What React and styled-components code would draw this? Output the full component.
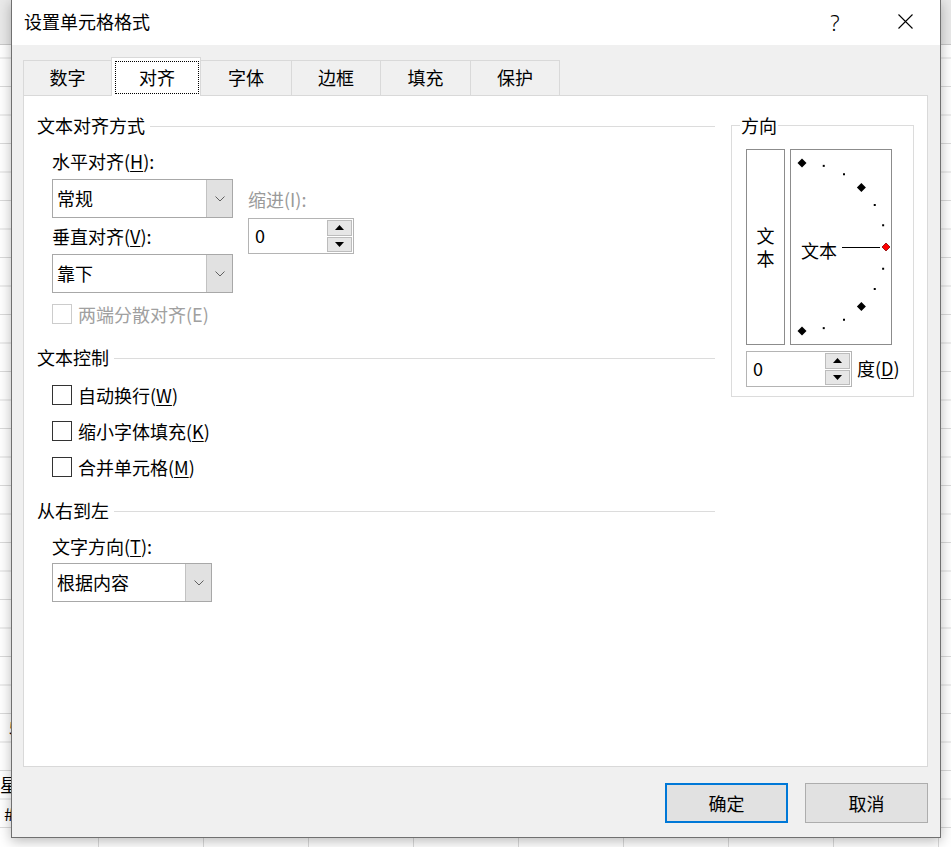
import React from 'react';
import styled, { createGlobalStyle } from 'styled-components';

const GlobalStyle = createGlobalStyle`
  html, body {
    margin: 0;
    padding: 0;
  }
  body {
    font-family: "Noto Sans CJK SC", "Noto Sans", sans-serif;
    font-size: 18px;
    color: #000;
    overflow: hidden;
  }
  * {
    box-sizing: border-box;
  }
`;

// spreadsheet behind the dialog
const Sheet = styled.div`
  position: relative;
  width: 951px;
  height: 847px;
  overflow: hidden;
  background: #fff;
  display: flex;
  flex-direction: column;
`;

const SheetTop = styled.div`
  flex: none;
  height: 45px;
  background: #e9e9e9;
  border-bottom: 1px solid #c9c9c9;
`;

const SheetGrid = styled.div`
  flex: 1;
  background-image:
    linear-gradient(to bottom, transparent calc(100% - 1px), #dadada calc(100% - 1px)),
    linear-gradient(to right, transparent calc(100% - 1px), #dadada calc(100% - 1px));
  background-size: 100% 28.5px, 105px 100%;
  background-position: 0 -15px, -6px 0;
`;

const CellColumn = styled.div`
  padding-top: 668px;
  display: flex;
  flex-direction: column;
`;

const Cell = styled.div`
  height: 28.5px;
  line-height: 28.5px;
  white-space: nowrap;
  padding-left: ${p => p.$indent || 0}px;
`;

// dialog
const Dialog = styled.div`
  position: absolute;
  top: 0;
  left: 11px;
  width: 930px;
  height: 838px;
  background: #f0f0f0;
  border: 1px solid #707070;
  border-top: none;
  box-shadow: 0 3px 12px rgba(0, 0, 0, 0.28);
  display: flex;
  flex-direction: column;
`;

const TitleBar = styled.div`
  flex: none;
  height: 45px;
  background: #fff;
  display: flex;
  align-items: center;
`;

const Title = styled.div`
  flex: 1;
  padding: 0 0 3px 12px;
  line-height: 24px;
`;

const CaptionButton = styled.div`
  width: 70px;
  height: 45px;
  display: flex;
  align-items: center;
  justify-content: center;
  padding-bottom: 2px;
  font-family: "Noto Sans", sans-serif;
  font-weight: 300;
  font-size: 22px;
`;

const Body = styled.div`
  flex: 1;
  padding: 12px 12px 0 11px;
  display: flex;
  flex-direction: column;
`;

const TabRow = styled.div`
  display: flex;
  align-items: flex-end;
  height: 39px;
  margin-bottom: -1px;
  position: relative;
  z-index: 1;
`;

const Tab = styled.div`
  width: ${p => p.$w}px;
  height: ${p => (p.$active ? 39 : 35)}px;
  margin-bottom: ${p => (p.$active ? 0 : 1)}px;
  margin-left: ${p => (p.$first ? 0 : -1)}px;
  border: 1px solid #d9d9d9;
  border-bottom: none;
  background: ${p => (p.$active ? '#fff' : '#f0f0f0')};
  position: relative;
  z-index: ${p => (p.$active ? 2 : 1)};
  display: flex;
  padding: ${p => (p.$active ? '3px 1px 2px 3px' : '0')};
`;

const TabLabel = styled.div`
  flex: 1;
  display: flex;
  align-items: center;
  justify-content: center;
  line-height: 24px;
  padding-bottom: 2px;
  border: 1px ${p => (p.$focus ? 'dotted #000' : 'solid transparent')};
`;

const Panel = styled.div`
  height: 672px;
  background: #fff;
  border: 1px solid #d9d9d9;
  display: flex;
`;

const LeftCol = styled.div`
  width: 691px;
  padding: 17px 0 0 13px;
`;

const SectionHeader = styled.div`
  display: flex;
  align-items: center;
  height: 24px;
  line-height: 22px;
  margin-top: ${p => p.$mt || 0}px;
  &::after {
    content: '';
    flex: 1;
    height: 1px;
    margin: 2px 0 0 5px;
    background: #dcdcdc;
  }
`;

const Indent = styled.div`
  padding-left: 15px;
`;

const Label = styled.div`
  height: 24px;
  line-height: 23px;
  white-space: nowrap;
  margin-top: ${p => p.$mt || 0}px;
  color: ${p => (p.$disabled ? '#9a9a9a' : '#000')};
  u {
    text-underline-offset: 2px;
  }
`;

const AlignRow = styled.div`
  display: flex;
  margin-top: 13px;
`;

const Column = styled.div`
  display: flex;
  flex-direction: column;
  padding-top: ${p => p.$pt || 0}px;
  margin-left: ${p => p.$ml || 0}px;
`;

const SelectBox = styled.div`
  width: ${p => p.$w}px;
  height: 39px;
  margin-top: ${p => p.$mt || 0}px;
  border: 1px solid #a8a8a8;
  background: #fff;
  display: flex;
`;

const SelectValue = styled.div`
  flex: 1;
  padding: 0 0 2px 4px;
  display: flex;
  align-items: center;
`;

const DropButton = styled.div`
  width: 26px;
  background: #e1e1e1;
  border-left: 1px solid #c2c2c2;
  display: flex;
  align-items: center;
  justify-content: center;
`;

const SpinBox = styled.div`
  width: 106px;
  height: 36px;
  margin-top: ${p => p.$mt || 0}px;
  border: 1px solid #b4b4b4;
  background: #fff;
  display: flex;
  padding: 1px;
`;

const SpinValue = styled.div`
  flex: 1;
  padding: 0 0 3px 5px;
  display: flex;
  align-items: center;
`;

const SpinButtons = styled.div`
  width: 25px;
  display: flex;
  flex-direction: column;
  gap: 1px;
`;

const SpinButton = styled.div`
  flex: 1;
  background: #e6e6e6;
  border: 1px solid #bcbcbc;
  display: flex;
  align-items: center;
  justify-content: center;
`;

const CheckRow = styled.div`
  display: flex;
  align-items: center;
  gap: 6px;
  height: 24px;
  margin-top: ${p => p.$mt || 0}px;
  color: ${p => (p.$disabled ? '#a0a0a0' : '#000')};
  u {
    text-underline-offset: 2px;
  }
`;

const CheckBox = styled.div`
  width: 20px;
  height: 20px;
  background: #fff;
  border: 1px solid ${p => (p.$disabled ? '#cccccc' : '#333')};
`;

const RightCol = styled.div`
  margin: 17px 0 0 16px;
`;

const GroupBox = styled.fieldset`
  width: 183px;
  margin: 0;
  padding: 0;
  min-width: 0;
  border: 1px solid #dcdcdc;
`;

const Legend = styled.legend`
  margin-left: 8px;
  padding: 0 1px;
  line-height: 24px;
`;

const GroupBody = styled.div`
  padding: 12px 0 9px 14px;
`;

const OrientRow = styled.div`
  display: flex;
  gap: 5px;
`;

const VertBox = styled.div`
  width: 39px;
  height: 196px;
  border: 1px solid #8c8c8c;
  display: flex;
  align-items: center;
  justify-content: center;
  padding-top: 5px;
`;

const VertText = styled.span`
  writing-mode: vertical-rl;
  letter-spacing: 5px;
  line-height: 24px;
`;

const DialBox = styled.div`
  width: 102px;
  height: 196px;
  border: 1px solid #8c8c8c;
  display: flex;
`;

const DegreeRow = styled.div`
  display: flex;
  align-items: center;
  gap: 5px;
  margin-top: 6px;
  u {
    text-underline-offset: 2px;
  }
`;

const DegreeLabel = styled.span`
  padding-bottom: 3px;
`;

const Footer = styled.div`
  display: flex;
  justify-content: flex-end;
  gap: 17px;
  margin-top: 16px;
`;

const Button = styled.div`
  width: 123px;
  height: 40px;
  padding-bottom: 1px;
  background: #e1e1e1;
  border: ${p => (p.$primary ? '2px solid #0078d7' : '1px solid #adadad')};
  display: flex;
  align-items: center;
  justify-content: center;
`;

const Chevron = () => (
  <svg width="10" height="6" viewBox="0 0 10 6">
    <polyline points="0.5,0.5 5,5 9.5,0.5" fill="none" stroke="#606060" strokeWidth="1" />
  </svg>
);

const Arrow = ({ up }) => (
  <svg width="9" height="5" viewBox="0 0 9 5">
    <polygon points={up ? '4.5,0 9,5 0,5' : '0,0 9,0 4.5,5'} fill="#000" />
  </svg>
);

const Select = ({ value, w, mt }) => (
  <SelectBox $w={w} $mt={mt}>
    <SelectValue>{value}</SelectValue>
    <DropButton>
      <Chevron />
    </DropButton>
  </SelectBox>
);

const Spinner = ({ mt }) => (
  <SpinBox $mt={mt}>
    <SpinValue>0</SpinValue>
    <SpinButtons>
      <SpinButton><Arrow up /></SpinButton>
      <SpinButton><Arrow /></SpinButton>
    </SpinButtons>
  </SpinBox>
);

const Dial = () => {
  const cx = 11;
  const cy = 97;
  const r = 84;
  const marks = [90, 75, 60, 45, 30, 15, -15, -30, -45, -60, -75, -90];
  return (
    <svg width="100" height="194" viewBox="0 0 100 194">
      {marks.map(a => {
        const x = cx + r * Math.cos((a * Math.PI) / 180);
        const y = cy - r * Math.sin((a * Math.PI) / 180);
        if (a % 45 === 0) {
          return (
            <polygon
              key={a}
              points={`${x},${y - 4.5} ${x + 4.5},${y} ${x},${y + 4.5} ${x - 4.5},${y}`}
              fill="#000"
            />
          );
        }
        return <rect key={a} x={x - 1} y={y - 1} width="2" height="2" fill="#000" />;
      })}
      <line x1="51" y1="97.5" x2="89" y2="97.5" stroke="#000" strokeWidth="1" />
      <polygon points="95,93 99,97 95,101 91,97" fill="#f00" stroke="#800" strokeWidth="0.8" />
      <text x="10" y="108" fontSize="18" fontFamily="Noto Sans CJK SC, sans-serif" fill="#000">文本</text>
    </svg>
  );
};

const tabs = [
  { label: '数字', w: 89 },
  { label: '对齐', w: 90, active: true },
  { label: '字体', w: 92 },
  { label: '边框', w: 90 },
  { label: '填充', w: 91 },
  { label: '保护', w: 90 },
];

export default function App() {
  return (
    <>
      <GlobalStyle />
      <Sheet>
        <SheetTop />
        <SheetGrid>
          <CellColumn>
            <Cell $indent={9}>5</Cell>
            <Cell />
            <Cell>星期</Cell>
            <Cell $indent={4}>#N/A</Cell>
          </CellColumn>
        </SheetGrid>

        <Dialog>
          <TitleBar>
            <Title>设置单元格格式</Title>
            <CaptionButton>?</CaptionButton>
            <CaptionButton>
              <svg width="15" height="15" viewBox="0 0 15 15">
                <path d="M0.5 0.5 L14.5 14.5 M14.5 0.5 L0.5 14.5" stroke="#000" strokeWidth="1.1" />
              </svg>
            </CaptionButton>
          </TitleBar>

          <Body>
            <TabRow>
              {tabs.map((t, i) => (
                <Tab key={t.label} $w={t.w} $active={t.active} $first={i === 0}>
                  <TabLabel $focus={t.active}>{t.label}</TabLabel>
                </Tab>
              ))}
            </TabRow>

            <Panel>
              <LeftCol>
                <SectionHeader>文本对齐方式</SectionHeader>
                <Indent>
                  <AlignRow>
                    <Column>
                      <Label>水平对齐(<u>H</u>):</Label>
                      <Select value="常规" w={181} mt={5} />
                      <Label $mt={7}>垂直对齐(<u>V</u>):</Label>
                      <Select value="靠下" w={181} mt={5} />
                    </Column>
                    <Column $pt={38} $ml={15}>
                      <Label $disabled>缩进(I):</Label>
                      <Spinner mt={6} />
                    </Column>
                  </AlignRow>
                  <CheckRow $mt={9} $disabled>
                    <CheckBox $disabled />
                    两端分散对齐(E)
                  </CheckRow>
                </Indent>

                <SectionHeader $mt={19}>文本控制</SectionHeader>
                <Indent>
                  <CheckRow $mt={14}>
                    <CheckBox />
                    <span>自动换行(<u>W</u>)</span>
                  </CheckRow>
                  <CheckRow $mt={12}>
                    <CheckBox />
                    <span>缩小字体填充(<u>K</u>)</span>
                  </CheckRow>
                  <CheckRow $mt={12}>
                    <CheckBox />
                    <span>合并单元格(<u>M</u>)</span>
                  </CheckRow>
                </Indent>

                <SectionHeader $mt={19}>从右到左</SectionHeader>
                <Indent>
                  <Label $mt={13}>文字方向(<u>T</u>):</Label>
                  <Select value="根据内容" w={160} mt={4} />
                </Indent>
              </LeftCol>

              <RightCol>
                <GroupBox>
                  <Legend>方向</Legend>
                  <GroupBody>
                    <OrientRow>
                      <VertBox>
                        <VertText>文本</VertText>
                      </VertBox>
                      <DialBox>
                        <Dial />
                      </DialBox>
                    </OrientRow>
                    <DegreeRow>
                      <Spinner />
                      <DegreeLabel>度(<u>D</u>)</DegreeLabel>
                    </DegreeRow>
                  </GroupBody>
                </GroupBox>
              </RightCol>
            </Panel>

            <Footer>
              <Button $primary>确定</Button>
              <Button>取消</Button>
            </Footer>
          </Body>
        </Dialog>
      </Sheet>
    </>
  );
}
